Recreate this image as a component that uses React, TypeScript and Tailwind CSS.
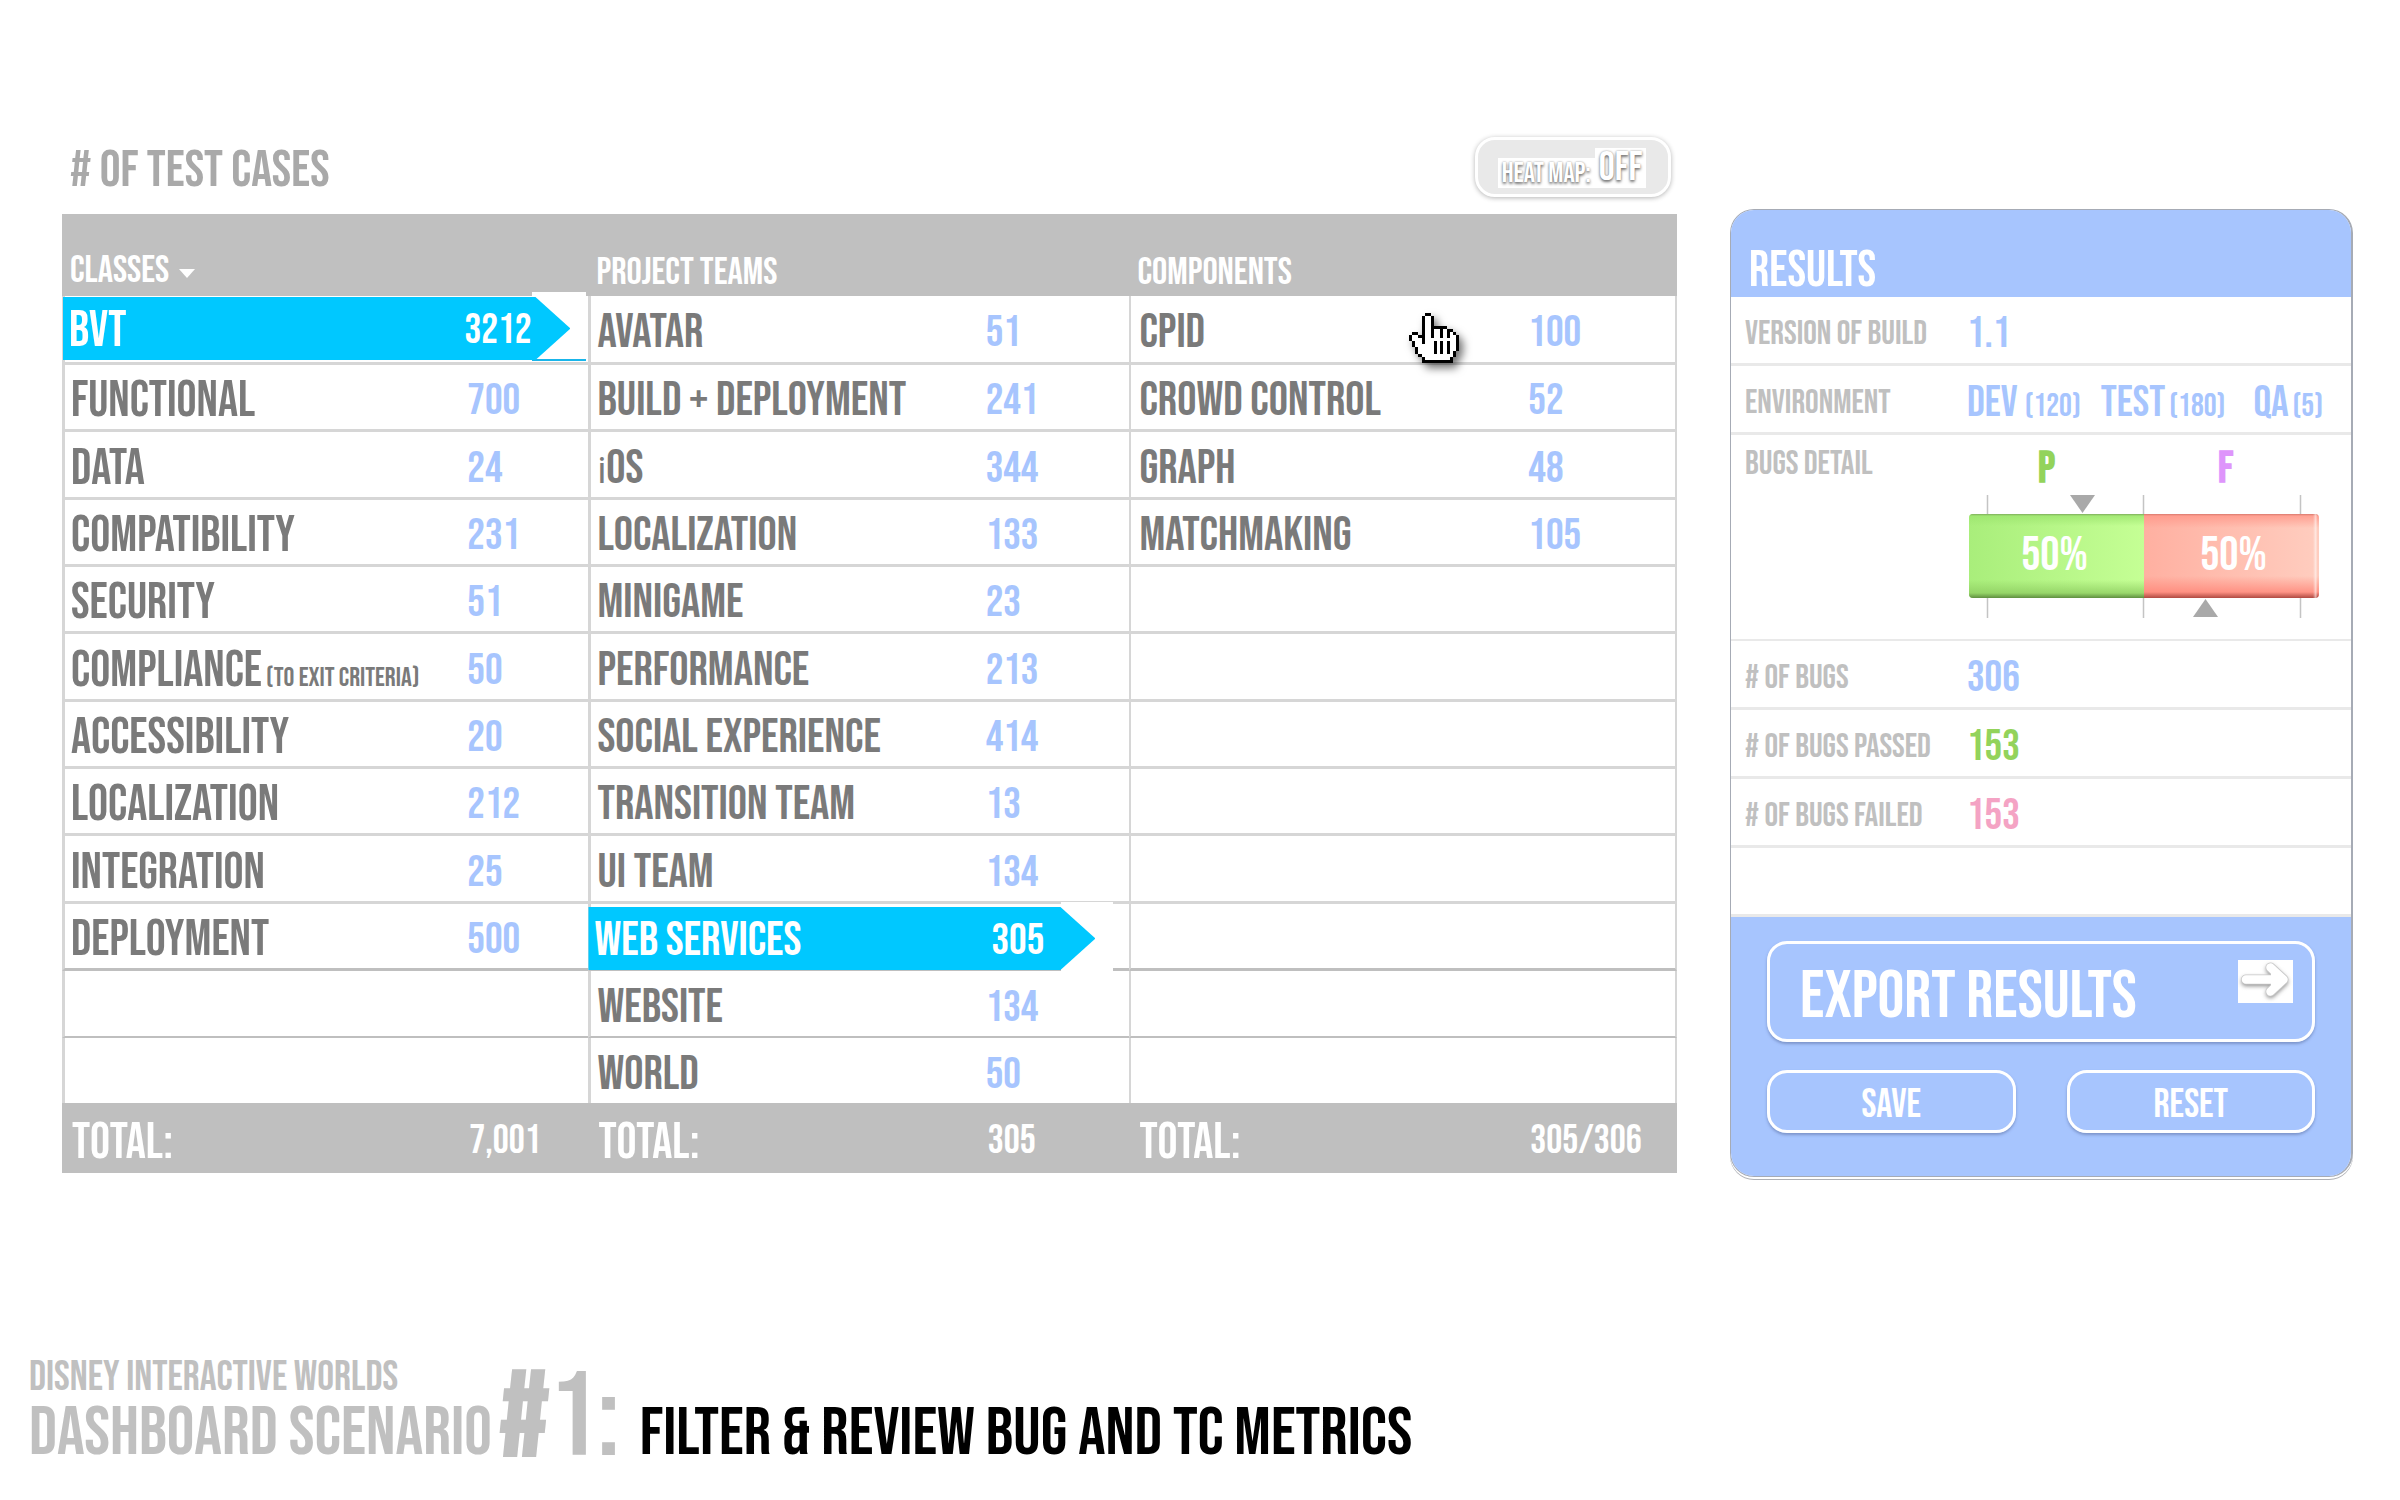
import type { ReactNode } from "react";

type Item = { name: ReactNode; count: string; selected?: boolean };

const classes: Item[] = [
  { name: "BVT", count: "3212", selected: true },
  { name: "FUNCTIONAL", count: "700" },
  { name: "DATA", count: "24" },
  { name: "COMPATIBILITY", count: "231" },
  { name: "SECURITY", count: "51" },
  {
    name: (
      <>
        COMPLIANCE<span className="pl-1 text-[27px]">(TO EXIT CRITERIA)</span>
      </>
    ),
    count: "50",
  },
  { name: "ACCESSIBILITY", count: "20" },
  { name: "LOCALIZATION", count: "212" },
  { name: "INTEGRATION", count: "25" },
  { name: "DEPLOYMENT", count: "500" },
];

const teams: Item[] = [
  { name: "AVATAR", count: "51" },
  { name: "BUILD + DEPLOYMENT", count: "241" },
  {
    name: (
      <>
        <span className="font-['Roboto'] text-[36px] font-normal">i</span>OS
      </>
    ),
    count: "344",
  },
  { name: "LOCALIZATION", count: "133" },
  { name: "MINIGAME", count: "23" },
  { name: "PERFORMANCE", count: "213" },
  { name: "SOCIAL EXPERIENCE", count: "414" },
  { name: "TRANSITION TEAM", count: "13" },
  { name: "UI TEAM", count: "134" },
  { name: "WEB SERVICES", count: "305", selected: true },
  { name: "WEBSITE", count: "134" },
  { name: "WORLD", count: "50" },
];

const components: Item[] = [
  { name: "CPID", count: "100" },
  { name: "CROWD CONTROL", count: "52" },
  { name: "GRAPH", count: "48" },
  { name: "MATCHMAKING", count: "105" },
];

const rowHeights = [
  "h-[69px]", "h-[67px]", "h-[68px]", "h-[67px]", "h-[67px]", "h-[68px]",
  "h-[67px]", "h-[67px]", "h-[68px]", "h-[67px]", "h-[67px]", "h-[65px]",
];

const handPixels = [
  ".....##.........",
  "....#oo#........",
  "....#oo#........",
  "....#oo#........",
  "....#oo#####....",
  "....#oo#oo#o##..",
  ".##.#oo#oo#o#o#.",
  "#oo##oo#oo#o#oo#",
  "#ooo#oooooooooo#",
  ".#oo#ooo#o#o#oo#",
  ".#oooooo#o#o#oo#",
  "..#ooooo#o#o#oo#",
  "..#ooooo#o#o#o#.",
  "...#oooooooooo#.",
  "....#oooooooo#..",
  "....##########..",
];

function HandPointer() {
  return (
    <svg
      viewBox="0 0 16 16"
      className="pointer-events-none absolute top-[17px] right-[61px] z-10 size-[50px] drop-shadow-[4px_5px_4px_rgba(0,0,0,0.55)]"
      shapeRendering="crispEdges"
      aria-hidden="true"
    >
      {handPixels.flatMap((line, y) =>
        line.split("").map((c, x) =>
          c === "." ? null : (
            <rect key={`${x}-${y}`} x={x} y={y} width="1" height="1" fill={c === "#" ? "#000" : "#fff"} />
          ),
        ),
      )}
    </svg>
  );
}

type CellsProps = { item?: Item; row: number; wide?: boolean; last?: boolean; pointer?: boolean };

function Cells({ item, row, wide, last, pointer }: CellsProps) {
  const line =
    row === 11 ? "" : row === 9 ? "border-b-3 border-b-[#bfbfbf]" : row === 10 ? "border-b-2 border-b-[#bfbfbf]" : "border-b-3 border-b-[#d6d6d6]";
  const size = wide ? "text-[50px]" : "text-[48px]";
  if (item?.selected) {
    const first = row === 0;
    return (
      <td colSpan={2} className={`relative border-l-3 border-l-[#d6d6d6] p-0 ${line}`}>
        <div
          className={
            first
              ? "absolute -top-1 right-0.5 bottom-px w-[54px] border-b-2 border-b-[#19b5ea] bg-white"
              : "absolute -top-0.5 right-4 -bottom-[3px] w-[52px] bg-white"
          }
        />
        <button
          type="button"
          aria-pressed="true"
          className={`absolute flex items-center bg-[#00c8ff] pt-1 text-left text-white [clip-path:polygon(0_0,calc(100%-35px)_0,100%_50%,calc(100%-35px)_100%,0_100%)] ${
            first ? "top-px right-[18px] bottom-0.5 -left-0.5" : "top-[3px] right-[34px] -bottom-0.5 -left-[3px]"
          }`}
        >
          <span className={`flex-1 pl-1.5 ${size}`}>{item.name}</span>
          <span className={first ? "w-[106px] text-[42px]" : "w-[104px] text-[44px]"}>{item.count}</span>
        </button>
      </td>
    );
  }
  return (
    <>
      <td
        className={`relative border-l-[#d6d6d6] pt-2 pb-0 text-[#7a7a7a] ${last ? "border-l-2 pl-2" : "border-l-3 pl-1.5"} ${size} ${line}`}
      >
        {item?.name}
        {pointer && <HandPointer />}
      </td>
      <td className={`pt-2 pb-0 pl-2 text-[44px] text-[#a7c5fe] ${line} ${last ? "border-r-2 border-r-[#d6d6d6]" : ""}`}>
        {item?.count}
      </td>
    </>
  );
}

function TestCaseTable() {
  return (
    <table className="w-full table-fixed border-separate border-spacing-0 text-left leading-none">
      <colgroup>
        <col className="w-[24.6%]" />
        <col className="w-[8%]" />
        <col className="w-[24.1%]" />
        <col className="w-[9.4%]" />
        <col className="w-[24.2%]" />
        <col className="w-[9.7%]" />
      </colgroup>
      <thead className="bg-[#c0c0c0] text-[38px] text-white">
        <tr className="h-[82px] align-bottom">
          <th colSpan={2} scope="colgroup" aria-sort="descending" className="pb-1.5 pl-2 font-normal">
            <button type="button" className="flex items-center gap-2.5">
              CLASSES
              <svg viewBox="0 0 16 9" className="mt-1 h-[9px] w-4" aria-hidden="true">
                <path d="M0 0h16l-8 9z" fill="#fff" />
              </svg>
            </button>
          </th>
          <th colSpan={2} scope="colgroup" className="pb-1 pl-2 font-normal">PROJECT TEAMS</th>
          <th colSpan={2} scope="colgroup" className="pb-1 pl-2 font-normal">COMPONENTS</th>
        </tr>
      </thead>
      <tbody>
        {rowHeights.map((height, row) => (
          <tr key={row} className={height}>
            <Cells item={classes[row]} row={row} wide />
            <Cells item={teams[row]} row={row} />
            <Cells item={components[row]} row={row} last pointer={row === 0} />
          </tr>
        ))}
      </tbody>
      <tfoot className="bg-[#bfbfbf] text-white">
        <tr className="h-[70px]">
          {["7,001", "305", "305/306"].map((total) => [
            <th key={`${total}-label`} scope="row" className="pt-2.5 pl-2.5 text-[50px] font-normal">TOTAL:</th>,
            <td key={total} className="pt-1.5 pl-2.5 text-[40px]">{total}</td>,
          ])}
        </tr>
      </tfoot>
    </table>
  );
}

function ResultRow({ label, children }: { label: string; children?: ReactNode }) {
  return (
    <div className="grid h-[69px] grid-cols-[222px_1fr] items-center border-b-3 border-[#e9e9e9] pt-2 pl-3.5">
      <dt className="text-[34px] whitespace-nowrap text-[#c0c0c0]">{label}</dt>
      <dd className="text-[44px] text-[#a7c5fe]">{children}</dd>
    </div>
  );
}

function BugsChart() {
  return (
    <div className="w-[350px]">
      <div className="grid grid-cols-2 pr-4 text-center text-[44px] font-bold">
        <span className="pr-3 text-[#93d35b]">P</span>
        <span className="pl-3 text-[#de95fb]">F</span>
      </div>
      <svg viewBox="0 0 350 19" className="mt-1 h-[19px] w-full" aria-hidden="true">
        <path d="M18.500 0v19M174.500 0v19M331.500 0v19" stroke="#c4c4c4" strokeWidth="1.500" />
        <path d="M101 0h25l-12.500 18z" fill="#a9a9a9" />
      </svg>
      <div className="flex h-[84px] overflow-hidden rounded text-center text-[48px] leading-[84px] text-white">
        <div className="flex-1 bg-[linear-gradient(to_bottom,#7fae5c_0,#9de56fcc_2px,#9de56f00_12px,#9de56f00_66px,#8fce62cc_79px,#5f8f40_84px),linear-gradient(to_right,#a9ee7b,#c5ff95)] pr-1">
          50%
        </div>
        <div className="flex-1 bg-[linear-gradient(to_left,#fff0_0,#fff0_2px,#fff9_3px,#fff0_6px),linear-gradient(to_bottom,#d97a6e_0,#ff9789cc_2px,#ff978900_14px,#ff978900_62px,#ff8779cc_78px,#b04a42_84px),linear-gradient(to_right,#ffb0a1,#ffcdbf)] pl-1">
          50%
        </div>
      </div>
      <svg viewBox="0 0 350 20" className="h-5 w-full" aria-hidden="true">
        <path d="M18.500 0v20M174.500 0v20M331.500 0v20" stroke="#c4c4c4" strokeWidth="1.500" />
        <path d="M224 19h25l-12.500-18z" fill="#a9a9a9" />
      </svg>
    </div>
  );
}

function ExportArrow() {
  const arrow = "M8 19.500H44M32.500 7.500l13 12-13 12";
  return (
    <svg viewBox="0 0 55 43" className="h-[43px] w-[55px]" fill="none" strokeLinecap="round" strokeLinejoin="round" aria-hidden="true">
      <path d={arrow} stroke="#8a8a8a" strokeWidth="9" className="translate-y-0.5 blur-[2px]" />
      <path d={arrow} stroke="#c9c9c9" strokeWidth="10" />
      <path d={arrow} stroke="#fff" strokeWidth="8.500" />
      <path d="M33 12l9 7.500-9 7.500z" fill="#fff" />
    </svg>
  );
}

const outlined = "border-3 border-white rounded-[20px] text-white shadow-[0_2px_3px_rgba(90,110,160,0.55)]";

function ResultsPanel() {
  return (
    <section className="mt-[72px] self-start overflow-hidden rounded-[24px] border border-r-2 border-[#a6abb5] leading-none shadow-[0_2px_0_#fff,0_3px_0_#aeb0b5]">
      <h2 className="flex h-[87px] items-end bg-[#a7c5fe] pb-px pl-[18px] text-[50px] text-white">RESULTS</h2>
      <dl>
        <ResultRow label="VERSION OF BUILD">1.1</ResultRow>
        <ResultRow label="ENVIRONMENT">
          <ul className="flex items-baseline justify-between pr-7">
            <li>DEV <span className="text-[32px]">(120)</span></li>
            <li>TEST<span className="pl-1 text-[32px]">(180)</span></li>
            <li className="pl-2">QA<span className="pl-1 text-[32px]">(5)</span></li>
          </ul>
        </ResultRow>
        <div className="grid h-[206px] grid-cols-[222px_1fr] border-b-2 border-[#e9e9e9] pt-3 pl-3.5">
          <dt className="text-[34px] text-[#c0c0c0]">BUGS DETAIL</dt>
          <dd className="pl-0.5"><BugsChart /></dd>
        </div>
        <ResultRow label="# OF BUGS">306</ResultRow>
        <ResultRow label="# OF BUGS PASSED"><span className="text-[#93d35b]">153</span></ResultRow>
        <ResultRow label="# OF BUGS FAILED"><span className="text-[#f4a3c4]">153</span></ResultRow>
        <div className="h-[69px] border-b-3 border-[#e9e9e9]" />
      </dl>
      <div className="flex flex-col gap-7 bg-[#a7c5fe] px-9 pt-6 pb-[43px]">
        <button type="button" className={`flex h-[101px] items-center justify-between pr-[19px] pl-[30px] text-[67px] ${outlined}`}>
          <span className="pt-3">EXPORT RESULTS</span>
          <span className="mt-4 self-start bg-white">
            <ExportArrow />
          </span>
        </button>
        <div className="grid grid-cols-2 gap-[51px] text-[40px]">
          <button type="button" className={`h-[63px] pt-1.5 ${outlined}`}>SAVE</button>
          <button type="button" className={`h-[63px] pt-1.5 ${outlined}`}>RESET</button>
        </div>
      </div>
    </section>
  );
}

export default function App() {
  return (
    <main className="flex min-h-screen flex-col justify-between bg-white pt-[137px] pb-8 font-['Bebas_Neue',Oswald,'Roboto_Condensed',sans-serif]">
      <div className="grid grid-cols-[1615fr_623fr] gap-[53px] pr-[47px] pl-[62px]">
        <section>
          <header className="mb-[17px] flex h-[60px] items-center justify-between pr-1.5 pl-2 leading-none">
            <h1 className="pt-2 text-[52px] text-[#a9a9a9]"># OF TEST CASES</h1>
            <button
              type="button"
              aria-pressed="false"
              className="flex h-[60px] w-[196px] items-end justify-center rounded-[20px] border-3 border-white bg-[#e9e9e9] pr-0.5 pb-1.5 text-white shadow-[0_1px_5px_rgba(0,0,0,0.3)] [text-shadow:0_2px_3px_#777,0_0_2px_#999]"
            >
              <span className="h-[30px] bg-white px-1 text-[28px] leading-[32px]">HEAT MAP:</span>
              <span className="h-10 bg-white px-1 text-[40px] leading-10">OFF</span>
            </button>
          </header>
          <TestCaseTable />
        </section>
        <ResultsPanel />
      </div>
      <footer className="flex items-end pl-[29px] leading-none text-[#c0c0c0]">
        <div>
          <p className="text-[42px]">DISNEY INTERACTIVE WORLDS</p>
          <p className="text-[69px]">DASHBOARD SCENARIO</p>
        </div>
        <p className="ml-2 text-[120px] leading-[98px]"><span className="font-bold">#</span>1:</p>
        <p className="ml-5 text-[68px] text-black">FILTER &amp; REVIEW BUG AND TC METRICS</p>
      </footer>
    </main>
  );
}
